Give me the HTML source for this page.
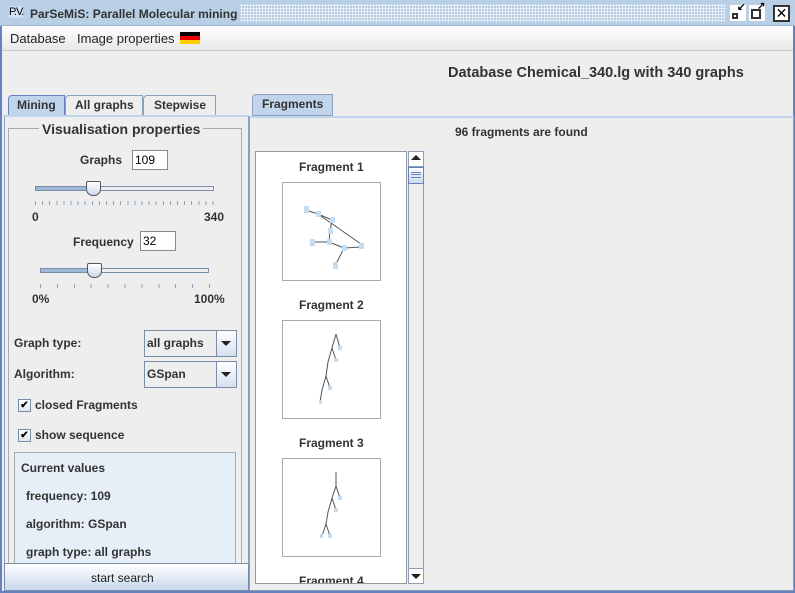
<!DOCTYPE html>
<html><head><meta charset="utf-8"><style>
*{box-sizing:border-box;margin:0;padding:0}
body{width:795px;height:593px;overflow:hidden;background:#eeeeee;font-family:"Liberation Sans",sans-serif;font-size:12px;font-weight:bold;color:#333;position:relative}
.a{position:absolute}
.t{position:absolute;white-space:nowrap}
.box{position:absolute;border:1px solid #8a8a8a;background:#fff}
</style></head><body>
<div class="a" style="left:0;top:0;width:795px;height:593px;border:2px solid #6382bf;border-top:none"></div>
<div class="a" style="left:0;top:0;width:795px;height:26px;background:#b8cfe5;border-bottom:1px solid #9eb5d2"></div>
<div class="a" style="left:240px;top:4px;width:485px;height:18px;background-image:radial-gradient(#fff 0.8px,transparent 1px);background-size:3px 3px"></div>
<div class="t" style="left:9px;top:6px;font-size:11px;font-weight:normal;color:#000;background:#cfe0f0;letter-spacing:-1px">P.V.</div>
<div class="t" style="left:30px;top:7px;font-size:12px;color:#333">ParSeMiS: Parallel Molecular mining</div>
<div class="a" style="left:730px;top:5px;width:16px;height:16px;background:#fff"><div class="a" style="left:2px;top:8px;width:6px;height:6px;border:2px solid #333"></div><div class="t" style="left:7px;top:-3px;font-size:10px;color:#000">↙</div></div>
<div class="a" style="left:749px;top:5px;width:16px;height:16px;background:#fff"><div class="a" style="left:2px;top:4px;width:10px;height:10px;border:2px solid #333"></div><div class="t" style="left:8px;top:-4px;font-size:10px;color:#000">↗</div></div>
<div class="a" style="left:773px;top:5px;width:17px;height:17px;background:#fff;border:2px solid #333;font-size:14px;line-height:12px;text-align:center;font-weight:normal;color:#000">✕</div>
<div class="a" style="left:2px;top:26px;width:791px;height:25px;background:linear-gradient(#fff,#e8e8e8);border-bottom:1px solid #ccc"></div>
<div class="t" style="left:10px;top:31px;font-weight:normal;font-size:13px;color:#222">Database</div>
<div class="t" style="left:77px;top:31px;font-weight:normal;font-size:13px;color:#222">Image properties</div>
<div class="a" style="left:180px;top:32px;width:20px;height:12px;background:linear-gradient(#000 33%,#e00 33%,#e00 66%,#fc0 66%)"></div>
<div class="t" style="left:448px;top:65px;font-size:14.5px;color:#333">Database Chemical_340.lg with 340 graphs</div>
<div class="a" style="left:8px;top:95px;width:57px;height:21px;background:#c0d4ec;border:1px solid #6382bf;border-radius:4px 0 0 0"></div>
<div class="t" style="left:17px;top:98px">Mining</div>
<div class="a" style="left:65px;top:95px;width:78px;height:20px;background:#eee;border:1px solid #8da0bb;border-bottom:none;border-radius:4px 0 0 0"></div>
<div class="t" style="left:75px;top:98px">All graphs</div>
<div class="a" style="left:143px;top:95px;width:73px;height:20px;background:#eee;border:1px solid #8da0bb;border-bottom:none;border-radius:4px 0 0 0"></div>
<div class="t" style="left:154px;top:98px">Stepwise</div>
<div class="a" style="left:4px;top:115px;width:245px;height:450px;border:1px solid #8da0bb;border-top:2px solid #c0d4ec"></div>
<div class="a" style="left:8px;top:128px;width:234px;height:440px;border:1px solid #aaa"></div>
<div class="t" style="left:39px;top:121px;font-size:14px;background:#eee;padding:0 3px">Visualisation properties</div>
<div class="t" style="left:80px;top:153px">Graphs</div>
<div class="box" style="left:132px;top:150px;width:36px;height:20px;font-weight:normal;padding:2px 0 0 2px;color:#000">109</div>
<div class="a" style="left:35px;top:186px;width:179px;height:5px;border:1px solid #7a8ea8;background:linear-gradient(90deg,#9fb8d8 0 32%,#eee 32%)"></div>
<div class="a" style="left:86px;top:181px;width:15px;height:15px;background:linear-gradient(#fff,#c9d8ec);border:1px solid #555;border-radius:2px 2px 7px 7px"></div>
<div class="a" style="left:35px;top:201px;width:180px;height:4px;background:repeating-linear-gradient(90deg,#8da4c0 0 1px,transparent 1px 7.1px)"></div>
<div class="t" style="left:32px;top:210px">0</div>
<div class="t" style="left:204px;top:210px">340</div>
<div class="t" style="left:73px;top:235px">Frequency</div>
<div class="box" style="left:140px;top:231px;width:36px;height:20px;font-weight:normal;padding:2px 0 0 2px;color:#000">32</div>
<div class="a" style="left:40px;top:268px;width:169px;height:5px;border:1px solid #7a8ea8;background:linear-gradient(90deg,#9fb8d8 0 32%,#eee 32%)"></div>
<div class="a" style="left:87px;top:263px;width:15px;height:15px;background:linear-gradient(#fff,#c9d8ec);border:1px solid #555;border-radius:2px 2px 7px 7px"></div>
<div class="a" style="left:40px;top:284px;width:170px;height:4px;background:repeating-linear-gradient(90deg,#8da4c0 0 1px,transparent 1px 16.9px)"></div>
<div class="t" style="left:32px;top:292px">0%</div>
<div class="t" style="left:194px;top:292px">100%</div>
<div class="t" style="left:14px;top:336px">Graph type:</div>
<div class="a" style="left:144px;top:330px;width:93px;height:27px;border:1px solid #7a8ea8;background:#eee"></div>
<div class="t" style="left:147px;top:336px">all graphs</div>
<div class="a" style="left:216px;top:331px;width:20px;height:25px;background:linear-gradient(#fff,#d5e0ee);border-left:1px solid #7a8ea8"></div>
<div class="a" style="left:221px;top:341px;border:5px solid transparent;border-top:5px solid #222"></div>
<div class="t" style="left:14px;top:367px">Algorithm:</div>
<div class="a" style="left:144px;top:361px;width:93px;height:27px;border:1px solid #7a8ea8;background:#eee"></div>
<div class="t" style="left:147px;top:367px">GSpan</div>
<div class="a" style="left:216px;top:362px;width:20px;height:25px;background:linear-gradient(#fff,#d5e0ee);border-left:1px solid #7a8ea8"></div>
<div class="a" style="left:221px;top:372px;border:5px solid transparent;border-top:5px solid #222"></div>
<div class="a" style="left:18px;top:399px;width:13px;height:13px;border:1px solid #7a8ea8;background:linear-gradient(#fff,#dde6f2);font-size:10px;line-height:11px;text-align:center;color:#000">✔</div>
<div class="t" style="left:35px;top:398px">closed Fragments</div>
<div class="a" style="left:18px;top:429px;width:13px;height:13px;border:1px solid #7a8ea8;background:linear-gradient(#fff,#dde6f2);font-size:10px;line-height:11px;text-align:center;color:#000">✔</div>
<div class="t" style="left:35px;top:428px">show sequence</div>
<div class="a" style="left:14px;top:452px;width:222px;height:112px;background:#e6eef7;border:1px solid #aaa;border-bottom:none"></div>
<div class="t" style="left:21px;top:461px">Current values</div>
<div class="t" style="left:26px;top:489px">frequency: 109</div>
<div class="t" style="left:26px;top:517px">algorithm: GSpan</div>
<div class="t" style="left:26px;top:545px">graph type: all graphs</div>
<div class="a" style="left:4px;top:563px;width:245px;height:28px;background:linear-gradient(#fff,#c9d8ec);border:1px solid #7a8ea8"></div>
<div class="t" style="left:91px;top:571px;font-weight:normal;font-size:12px;color:#222">start search</div>
<div class="a" style="left:252px;top:94px;width:81px;height:22px;background:#c0d4ec;border:1px solid #8da0bb;border-radius:4px 0 0 0"></div>
<div class="t" style="left:262px;top:97px">Fragments</div>
<div class="a" style="left:249px;top:116px;width:545px;height:475px;border:1px solid #8da0bb;border-top:2px solid #c0d4ec"></div>
<div class="t" style="left:455px;top:125px">96 fragments are found</div>
<div class="a" style="left:255px;top:151px;width:152px;height:433px;background:#fff;border:1px solid #999;overflow:hidden">
 <div class="t" style="left:43px;top:8px">Fragment 1</div>
 <div class="a" style="left:26px;top:30px;width:99px;height:99px;border:1px solid #aaa"></div>
 <svg class="a" style="left:26px;top:30px" width="99" height="99"><g stroke="#555" stroke-width="1"><line x1="24" y1="28" x2="36" y2="32"/><line x1="36" y1="32" x2="50" y2="38"/><line x1="36" y1="32" x2="79" y2="62"/><line x1="50" y1="38" x2="48" y2="49"/><line x1="48" y1="49" x2="47" y2="60"/><line x1="30" y1="60" x2="47" y2="60"/><line x1="47" y1="60" x2="62" y2="66"/><line x1="62" y1="66" x2="79" y2="65"/><line x1="62" y1="66" x2="54" y2="82"/></g><g fill="#c6dcf2"><rect x="22" y="24" width="5" height="7"/><rect x="34" y="29" width="5" height="6"/><rect x="48" y="35" width="5" height="6"/><rect x="46" y="46" width="5" height="6"/><rect x="28" y="57" width="5" height="7"/><rect x="45" y="57" width="5" height="6"/><rect x="60" y="63" width="5" height="6"/><rect x="77" y="61" width="5" height="6"/><rect x="51" y="80" width="5" height="7"/></g></svg>
 <div class="t" style="left:43px;top:146px">Fragment 2</div>
 <div class="a" style="left:26px;top:168px;width:99px;height:99px;border:1px solid #aaa"></div>
 <svg class="a" style="left:26px;top:168px" width="99" height="99"><g stroke="#555"><polyline points="54,14 50,28 46,42 44,56 40,70 38,82" fill="none"/><line x1="54" y1="14" x2="58" y2="28"/><line x1="50" y1="28" x2="54" y2="40"/><line x1="44" y1="56" x2="48" y2="68"/></g><g fill="#c6dcf2"><rect x="56" y="26" width="4" height="4"/><rect x="52" y="38" width="4" height="4"/><rect x="46" y="66" width="4" height="4"/><rect x="37" y="80" width="3" height="4"/></g></svg>
 <div class="t" style="left:43px;top:284px">Fragment 3</div>
 <div class="a" style="left:26px;top:306px;width:99px;height:99px;border:1px solid #aaa"></div>
 <svg class="a" style="left:26px;top:306px" width="99" height="99"><g stroke="#555"><polyline points="54,14 54,28 50,40 46,54 44,66 40,78" fill="none"/><line x1="54" y1="28" x2="58" y2="40"/><line x1="50" y1="40" x2="54" y2="52"/><line x1="44" y1="66" x2="48" y2="78"/></g><g fill="#c6dcf2"><rect x="56" y="38" width="4" height="4"/><rect x="52" y="50" width="4" height="4"/><rect x="46" y="76" width="4" height="4"/><rect x="38" y="76" width="3" height="4"/></g></svg>
 <div class="t" style="left:43px;top:422px">Fragment 4</div>
</div>
<div class="a" style="left:408px;top:151px;width:16px;height:433px;background:#eee;border:1px solid #8da0bb"></div>
<div class="a" style="left:408px;top:151px;width:16px;height:16px;background:#fff;border:1px solid #8da0bb"></div>
<div class="a" style="left:411px;top:155px;border:5px solid transparent;border-bottom:5px solid #222;border-top:none"></div>
<div class="a" style="left:408px;top:167px;width:16px;height:17px;background:linear-gradient(#fff,#c9d8ec);border:1px solid #6382bf"></div>
<div class="a" style="left:411px;top:172px;width:10px;height:6px;border-top:1px solid #6382bf;border-bottom:1px solid #6382bf"></div>
<div class="a" style="left:411px;top:174px;width:10px;height:1px;background:#6382bf"></div>
<div class="a" style="left:408px;top:568px;width:16px;height:16px;background:#fff;border:1px solid #8da0bb"></div>
<div class="a" style="left:411px;top:574px;border:5px solid transparent;border-top:5px solid #222;border-bottom:none"></div>
</body></html>
